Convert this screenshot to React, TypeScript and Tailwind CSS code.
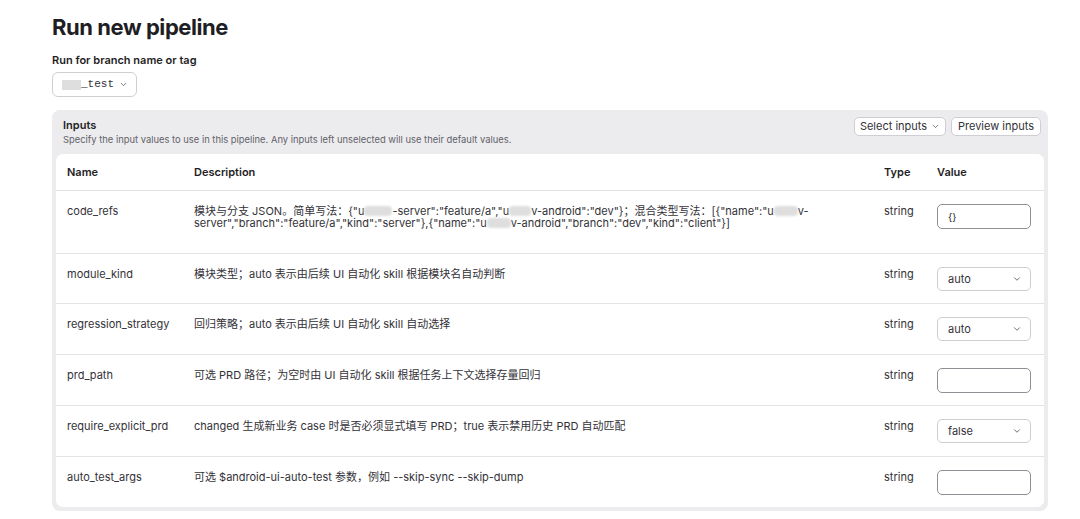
import { ChevronDown } from "lucide-react";

const font = { fontFamily: 'Inter, "Noto Sans CJK SC", "Noto Sans", sans-serif' };

function Blur({ w }: { w: number }) {
  return (
    <span
      className="inline-block h-[10px] align-[-1px] rounded-sm bg-[#dedede] blur-[1px]"
      style={{ width: w }}
    />
  );
}

function TextInput({ value }: { value?: string }) {
  return (
    <div className="h-[25px] w-[94px] rounded-[5px] border border-[#8f8e94] bg-white px-[10px] flex items-center text-[10px] text-[#1f1e24]">
      {value}
    </div>
  );
}

function SelectInput({ value }: { value: string }) {
  return (
    <div className="h-[24px] w-[94px] rounded-[5px] border border-[#cfcfd3] bg-white pl-[10px] pr-[8px] flex items-center justify-between text-[11px] text-[#333238]">
      <span>{value}</span>
      <ChevronDown size={10} strokeWidth={2} className="text-[#535158]" />
    </div>
  );
}

type Row = {
  name: string;
  desc: React.ReactNode;
  value: React.ReactNode;
  h: string;
};

const rows: Row[] = [
  {
    name: "code_refs",
    h: "h-[63px]",
    desc: (
      <>
        模块与分支 JSON。简单写法：{'{"u'}
        <Blur w={28} />
        {'-server":"feature/a","u'}
        <Blur w={22} />
        {'v-android":"dev"}'}；混合类型写法：{'[{"name":"u'}
        <Blur w={24} />
        {"v-"}
        <br />
        {'server","branch":"feature/a","kind":"server"},{"name":"u'}
        <Blur w={24} />
        {'v-android","branch":"dev","kind":"client"}]'}
      </>
    ),
    value: <TextInput value="{}" />,
  },
  {
    name: "module_kind",
    h: "h-[50px]",
    desc: "模块类型；auto 表示由后续 UI 自动化 skill 根据模块名自动判断",
    value: <SelectInput value="auto" />,
  },
  {
    name: "regression_strategy",
    h: "h-[51px]",
    desc: "回归策略；auto 表示由后续 UI 自动化 skill 自动选择",
    value: <SelectInput value="auto" />,
  },
  {
    name: "prd_path",
    h: "h-[51px]",
    desc: "可选 PRD 路径；为空时由 UI 自动化 skill 根据任务上下文选择存量回归",
    value: <TextInput />,
  },
  {
    name: "require_explicit_prd",
    h: "h-[51px]",
    desc: "changed 生成新业务 case 时是否必须显式填写 PRD；true 表示禁用历史 PRD 自动匹配",
    value: <SelectInput value="false" />,
  },
  {
    name: "auto_test_args",
    h: "h-[50px]",
    desc: "可选 $android-ui-auto-test 参数，例如 --skip-sync --skip-dump",
    value: <TextInput />,
  },
];

export default function App() {
  return (
    <div className="min-h-[519px] w-[1080px] bg-white text-[#333238]" style={font}>
      <div className="pl-[52px] pr-[32px] pt-[12px]">
        <h1 className="text-[22px] leading-[30px] font-bold tracking-[-0.02em] text-[#1f1e24]">
          Run new pipeline
        </h1>

        <div className="mt-[11px] text-[11px] leading-[14px] font-semibold text-[#1f1e24]">
          Run for branch name or tag
        </div>
        <div className="mt-[5px] inline-flex h-[25px] w-[85px] items-center gap-[3px] rounded-[6px] border border-[#cfcfd3] pl-[9px] text-[11px]">
          <span className="inline-block h-[10px] w-[19px] bg-[#dedede] blur-[0.5px]" />
          <span className="-ml-[3px] text-[#333238]" style={{ fontFamily: '"Liberation Mono", "DejaVu Sans Mono", monospace' }}>
            _test
          </span>
          <ChevronDown size={9} strokeWidth={2} className="ml-[2px] text-[#535158]" />
        </div>

        <div className="mt-[13px] w-[996px] rounded-[8px] bg-[#ececef] p-[4px] pt-[7px]">
          <div className="flex items-start justify-between pl-[7px] pr-[3px]">
            <div>
              <div className="text-[11px] leading-[14px] font-semibold text-[#1f1e24] mt-[1px]">Inputs</div>
              <div className="text-[9.4px] leading-[12px] text-[#626168] mt-[2px]">
                Specify the input values to use in this pipeline. Any inputs left unselected will use their default values.
              </div>
            </div>
            <div className="flex gap-[5px]">
              <div className="flex h-[19px] w-[92px] items-center justify-center gap-[4px] rounded-[5px] border border-[#cfcfd3] bg-white text-[11px] text-[#333238]">
                Select inputs
                <ChevronDown size={9} strokeWidth={2} className="text-[#535158]" />
              </div>
              <div className="flex h-[19px] w-[90px] items-center justify-center rounded-[5px] border border-[#cfcfd3] bg-white text-[11px] text-[#333238]">
                Preview inputs
              </div>
            </div>
          </div>

          <div className="mt-[8px] rounded-[7px] bg-white">
            <div className="grid h-[37px] grid-cols-[127px_690px_53px_94px] items-center border-b border-[#e3e3e6] pl-[11px] pr-[13px] text-[11px] font-semibold text-[#1f1e24]">
              <div>Name</div>
              <div>Description</div>
              <div>Type</div>
              <div>Value</div>
            </div>
            {rows.map((r, i) => (
              <div
                key={r.name}
                className={`grid grid-cols-[127px_690px_53px_94px] items-start pl-[11px] pr-[13px] pt-[13px] text-[11px] leading-[12px] ${r.h} ${
                  i < rows.length - 1 ? "border-b border-[#e3e3e6]" : ""
                }`}
              >
                <div className="pt-[1px] text-[#333238]">{r.name}</div>
                <div className="pt-[1px] text-[#333238] pr-[40px]">{r.desc}</div>
                <div className="pt-[1px] text-[#333238]">string</div>
                <div>{r.value}</div>
              </div>
            ))}
          </div>
        </div>
      </div>
    </div>
  );
}
